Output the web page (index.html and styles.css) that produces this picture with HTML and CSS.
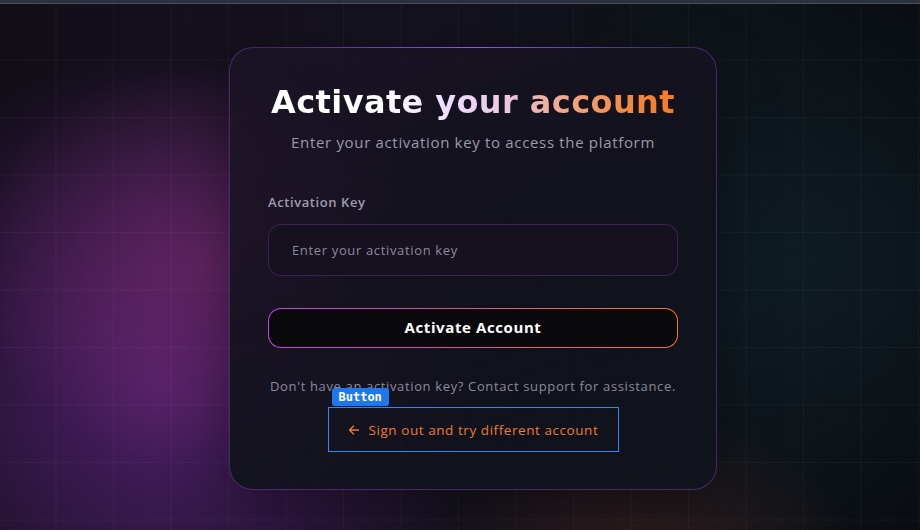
FILE: index.html
```html
<!DOCTYPE html>
<html lang="en">
<head>
<meta charset="utf-8">
<title>Activate your account</title>
<link rel="stylesheet" href="styles.css">
</head>
<body>
<div class="topbar"></div>
<main class="page">
  <section class="card">
    <h1 class="title">Activate your account</h1>
    <p class="subtitle">Enter your activation key to access the platform</p>
    <form class="form">
      <label class="label" for="key">Activation Key</label>
      <input class="input" id="key" type="text" placeholder="Enter your activation key">
      <button class="primary" type="button"><span>Activate Account</span></button>
    </form>
    <p class="help">Don't have an activation key? Contact support for assistance.</p>
    <div class="signout-wrap">
      <button class="signout" type="button">
        <svg class="arrow" width="12" height="12" viewBox="0 0 12 12" fill="none" stroke="currentColor" stroke-width="1.3" stroke-linecap="round" stroke-linejoin="round"><path d="M10.5 6H1.5M5.5 2L1.5 6l4 4"/></svg>
        <span>Sign out and try different account</span>
      </button>
      <span class="devtip">Button</span>
    </div>
  </section>
</main>
</body>
</html>
```
FILE: styles.css
```css
* { box-sizing: border-box; }
html, body { margin: 0; padding: 0; }
body {
  width: 920px;
  height: 530px;
  overflow: hidden;
  font-family: "Open Sans", "DejaVu Sans", sans-serif;
  background-color: #0b0c12;
  background-image:
    linear-gradient(rgba(255,255,255,0.035) 1px, transparent 1px),
    linear-gradient(90deg, rgba(255,255,255,0.035) 1px, transparent 1px),
    radial-gradient(ellipse 230px 200px at 200px 265px, rgba(125,45,110,0.55), rgba(100,35,100,0) 100%),
    radial-gradient(ellipse 320px 330px at 165px 380px, rgba(95,35,125,0.8), rgba(80,30,110,0.45) 55%, rgba(60,20,80,0) 100%),
    radial-gradient(ellipse 220px 160px at 640px 570px, rgba(95,45,40,0.45), rgba(60,30,30,0) 100%),
    radial-gradient(ellipse 330px 300px at 800px 260px, rgba(16,32,40,0.75), rgba(12,20,26,0) 100%),
    linear-gradient(90deg, #120e18 0%, #15121f 40%, #0e1218 75%, #090c10 100%);
  background-size: 57.5px 57.5px, 57.5px 57.5px, 100% 100%, 100% 100%, 100% 100%, 100% 100%, 100% 100%;
  background-position: 0 2px, -2px 0, 0 0, 0 0, 0 0, 0 0, 0 0;
}
.topbar {
  height: 4px;
  background: #2c3140;
  border-bottom: 1px solid #4a5062;
}
.page {
  display: flex;
  justify-content: center;
  padding: 43px 0 0 26px;
}
.card {
  position: relative;
  width: 488px;
  height: 443px;
  border-radius: 24px;
  border: 1px solid rgba(110, 60, 160, 0.55);
  background: linear-gradient(160deg, rgba(28,20,38,0.8) 0%, rgba(18,18,28,0.9) 45%, rgba(16,20,28,0.92) 100%);
  padding: 36px 38px 38px;
  display: flex;
  flex-direction: column;
  align-items: stretch;
  box-shadow: 0 20px 60px rgba(0,0,0,0.35);
}
.card::before {
  content: "";
  position: absolute;
  top: -1px;
  left: 40px;
  right: 40px;
  height: 1px;
  background: linear-gradient(90deg, rgba(140,80,255,0), rgba(150,90,255,0.9) 50%, rgba(140,80,255,0));
}
.title {
  margin: 0;
  align-self: center;
  text-align: center;
  font-family: "DejaVu Sans", sans-serif;
  font-weight: 700;
  font-size: 32px;
  line-height: 36px;
  letter-spacing: 0.4px;
  background: linear-gradient(90deg, #ffffff 0%, #ffffff 25%, #ecdcff 45%, #e9c8e0 58%, #f0b0a0 68%, #f48a40 88%, #f57a25 100%);
  -webkit-background-clip: text;
  background-clip: text;
  color: transparent;
}
.subtitle {
  margin: 11px 0 0;
  text-align: center;
  font-size: 15px;
  line-height: 22px;
  letter-spacing: 0.67px;
  color: #9a9aa8;
}
.form {
  display: flex;
  flex-direction: column;
  margin-top: 40px;
}
.label {
  font-size: 13px;
  line-height: 18px;
  font-weight: 600;
  letter-spacing: 0.58px;
  color: #a09cae;
}
.input {
  margin-top: 13px;
  height: 52px;
  border-radius: 13px;
  border: 1px solid rgba(90, 45, 130, 0.55);
  background: rgba(22,18,30,0.85);
  padding: 0 23px;
  font-family: inherit;
  font-size: 13px;
  letter-spacing: 0.65px;
  color: #ddd;
  outline: none;
}
.input::placeholder { color: #8c8a98; }
.primary {
  margin-top: 32px;
  height: 40px;
  padding: 0 0 3px;
  border-radius: 13px;
  border: 1px solid transparent;
  background:
    linear-gradient(#0a0a0d, #0a0a0d) padding-box,
    linear-gradient(90deg, #c040ee 0%, #e0508a 50%, #f07a28 100%) border-box;
  color: #ffffff;
  font-family: inherit;
  font-size: 15px;
  font-weight: 700;
  letter-spacing: 0.6px;
  cursor: pointer;
}
.help {
  margin: 29px 0 0;
  text-align: center;
  font-size: 13px;
  line-height: 18px;
  letter-spacing: 0.64px;
  color: #8c8a9a;
}
.signout-wrap {
  position: relative;
  margin-top: 13px;
  align-self: center;
  outline: 1px solid #2f86f6;
}
.signout {
  display: flex;
  align-items: center;
  gap: 9px;
  width: 289px;
  height: 43px;
  padding: 0 0 0 19px;
  background: transparent;
  border: none;
  color: #ec7a34;
  font-family: inherit;
  font-size: 13.5px;
  letter-spacing: 0.56px;
  cursor: pointer;
}
.arrow { flex: none; }
.devtip {
  position: absolute;
  left: 3px;
  top: -20px;
  height: 18px;
  padding: 0 7px;
  border-radius: 3px;
  background: #1f78ea;
  color: #ffffff;
  font-family: "DejaVu Sans Mono", monospace;
  font-size: 12px;
  font-weight: 700;
  line-height: 18px;
}
```
